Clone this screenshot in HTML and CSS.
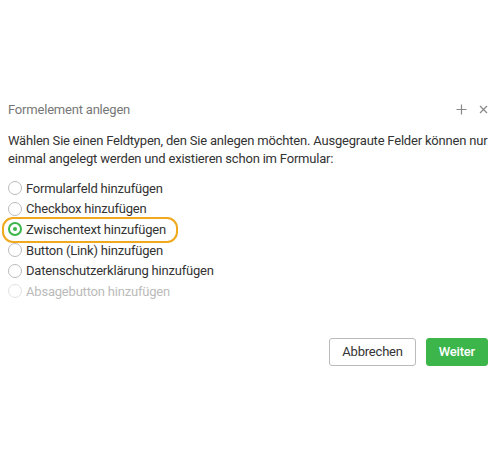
FILE: index.html
```html
<!DOCTYPE html>
<html>

<head>
    <meta name="viewport" content="width=device-width, initial-scale=1" />
    <title>Formelement anlegen</title>
    <link rel="stylesheet" href="styles.css">
</head>

<body>
    <div class="dialog">
        <div class="head">
            <span class="title">Formelement anlegen</span>
            <span class="tools">
                <svg width="11" height="11" viewBox="0 0 11 11"><path d="M5.5 0.5v10M0.5 5.5h10" stroke="#888" stroke-width="1.2" fill="none"/></svg>
                <svg width="9" height="9" viewBox="0 0 9 9"><path d="M1 1l7 7M8 1l-7 7" stroke="#888" stroke-width="1.2" fill="none"/></svg>
            </span>
        </div>
        <p class="intro">Wählen Sie einen Feldtypen, den Sie anlegen möchten. Ausgegraute Felder können nur einmal angelegt werden und existieren schon im Formular:</p>
        <div class="options">
            <label class="opt"><span class="r"></span>Formularfeld hinzufügen</label>
            <label class="opt"><span class="r"></span>Checkbox hinzufügen</label>
            <label class="opt on"><span class="r"></span>Zwischentext hinzufügen</label>
            <label class="opt"><span class="r"></span>Button (Link) hinzufügen</label>
            <label class="opt"><span class="r"></span>Datenschutzerklärung hinzufügen</label>
            <label class="opt off"><span class="r"></span>Absagebutton hinzufügen</label>
        </div>
        <div class="foot">
            <button class="btn">Abbrechen</button>
            <button class="btn go">Weiter</button>
        </div>
    </div>
</body>

</html>
```

FILE: styles.css
```css
body {
    margin: 0;
    background: #fff;
    font-family: "Roboto", "Noto Sans", sans-serif;
    letter-spacing: -0.2px;
    color: #333;
}

.dialog {
    padding: 100px 8px 0 8px;
}

.head {
    display: flex;
    justify-content: space-between;
    align-items: center;
    height: 18px;
}

.title {
    font-size: 13px;
    color: #777;
}

.tools {
    display: flex;
    align-items: center;
    gap: 12px;
}

.intro {
    margin: 14px 0 0 0;
    font-size: 13px;
    line-height: 18px;
}

.options {
    margin-top: 10px;
    display: flex;
    flex-direction: column;
    align-items: flex-start;
}

.opt {
    display: flex;
    align-items: center;
    gap: 4px;
    height: 20.6px;
    font-size: 13px;
    position: relative;
}

.r {
    border: 1px solid #bbb;
    border-radius: 50%;
    box-sizing: border-box;
    width: 14px;
    height: 14px;
}

.opt.on .r {
    border: 2px solid #3cb54a;
    display: flex;
    align-items: center;
    justify-content: center;
}

.opt.on .r::after {
    content: "";
    width: 4px;
    height: 4px;
    border-radius: 50%;
    background: #3cb54a;
}

.opt.on::before {
    content: "";
    position: absolute;
    left: -6px;
    right: -12px;
    top: -2px;
    bottom: -3px;
    border: 2px solid #f0a81c;
    border-radius: 11px;
}

.opt.off {
    color: #bbb;
}

.opt.off .r {
    border-color: #e2e2e2;
}

.foot {
    display: flex;
    justify-content: flex-end;
    gap: 10px;
    margin-top: 36px;
}

.btn {
    height: 28px;
    padding: 0 12px;
    border: 1px solid #bbb;
    border-radius: 3px;
    background: #fff;
    color: #333;
    font-family: inherit;
    letter-spacing: inherit;
    font-size: 13px;
}

.btn.go {
    background: #3cb54a;
    border-color: #3cb54a;
    color: #fff;
    font-weight: 500;
}
```
